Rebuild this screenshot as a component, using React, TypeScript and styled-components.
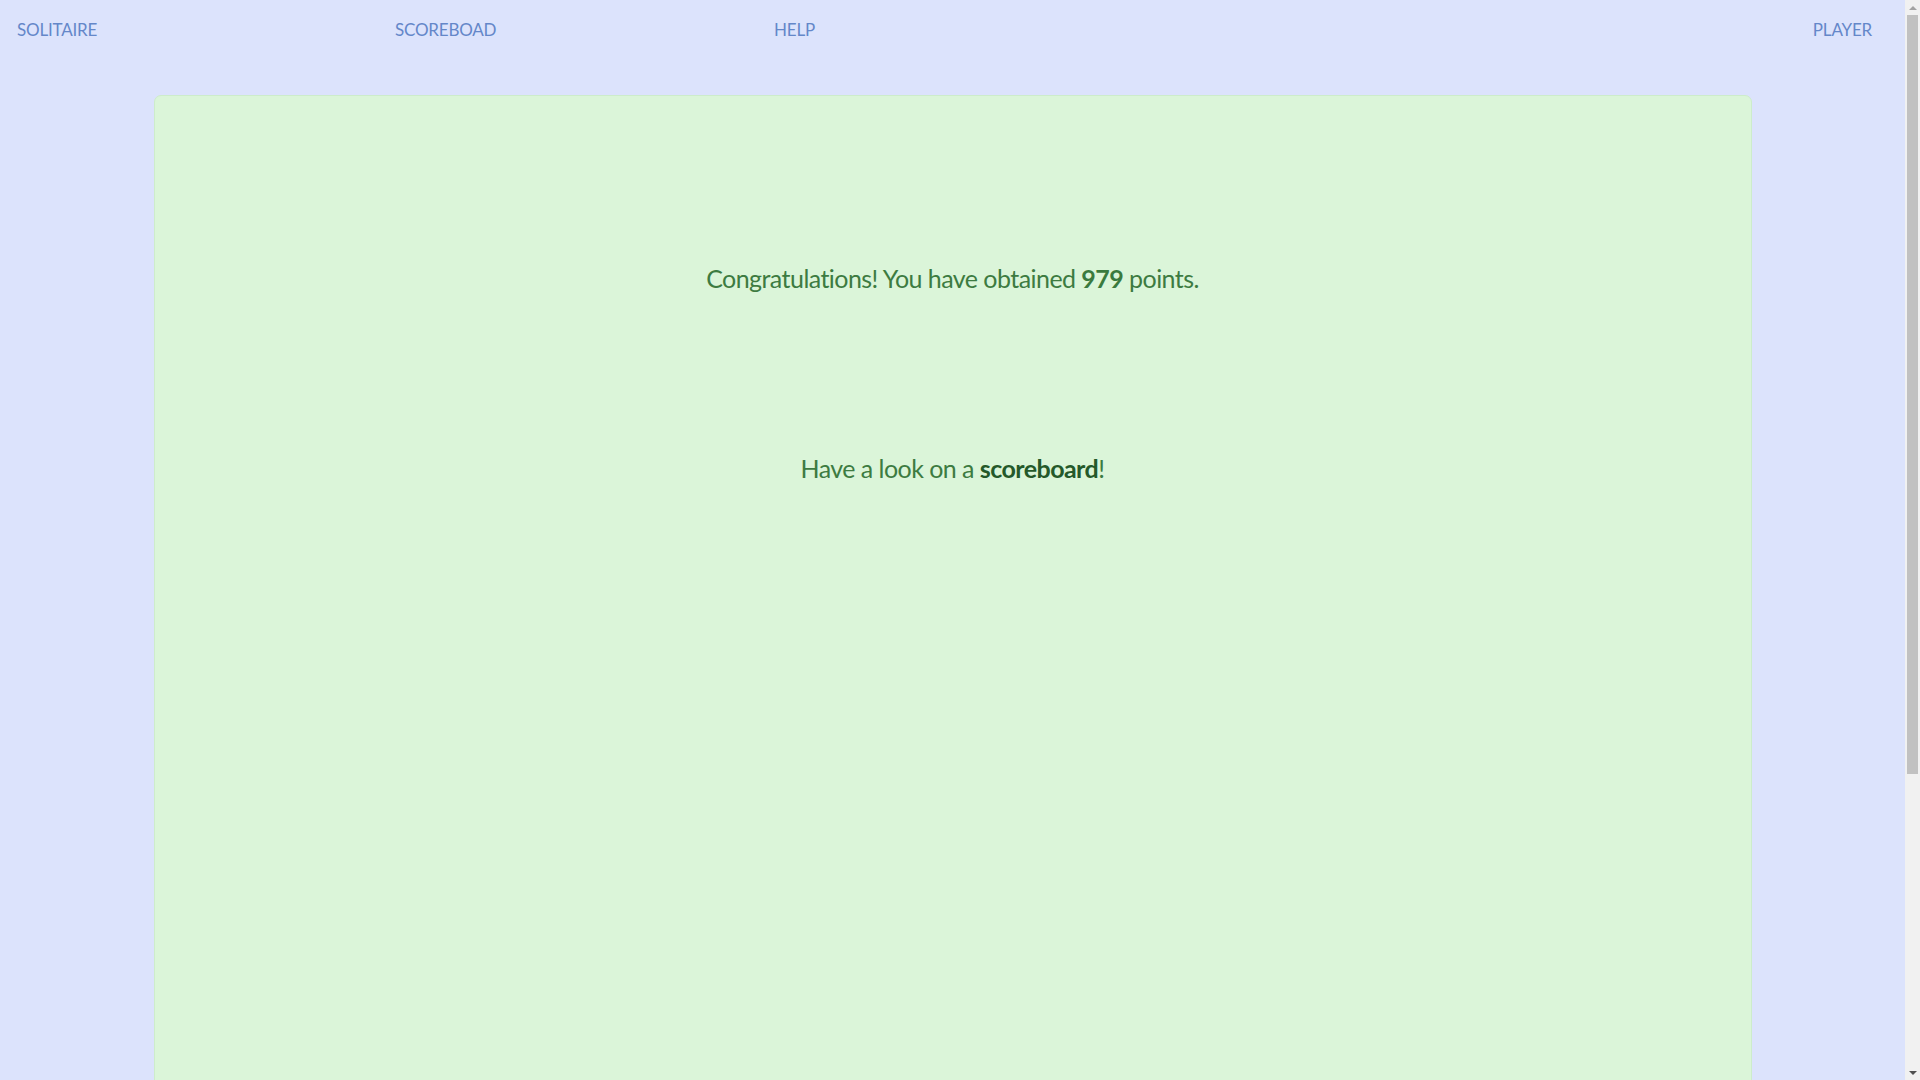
import React from "react";
import styled, { createGlobalStyle } from "styled-components";

const Global = createGlobalStyle`
  html, body {
    margin: 0;
    padding: 0;
    background: #dce3fc;
  }
  body {
    font-family: Lato, sans-serif;
  }
`;

const Page = styled.div`
  display: flex;
  flex-direction: column;
  padding: 0 15px 16px 0;
`;

const Nav = styled.nav`
  display: grid;
  grid-template-columns: 378px 379px 1fr auto;
  align-items: center;
  height: 60px;
  padding: 0 33px 0 17px;
`;

const NavLink = styled.a`
  font-family: Lato, sans-serif;
  font-size: 17px;
  font-weight: 400;
  color: #6487c9;
  text-decoration: none;
  letter-spacing: -0.2px;
  line-height: 1;
  margin-top: -2px;
`;

const Card = styled.main`
  width: 1598px;
  height: 1380px;
  margin: 35px auto 0;
  background: #dbf5d9;
  border: 1px solid #cdeccb;
  border-radius: 7px;
  display: flex;
  flex-direction: column;
  align-items: center;
  padding-top: 164px;
  box-sizing: border-box;
`;

const Message = styled.p<{ $gap?: number }>`
  margin: ${(p) => p.$gap ?? 0}px 0 0;
  font-family: Lato, sans-serif;
  font-size: 25px;
  line-height: 36px;
  color: #3d7b41;
  letter-spacing: -0.55px;
`;

const Strong = styled.b<{ $dark?: boolean }>`
  font-weight: 700;
  color: ${(p) => (p.$dark ? "#24592a" : "#3a7a3e")};
`;

/* Window scrollbar, drawn over the page's right edge */
const ScrollTrack = styled.div`
  position: fixed;
  top: 0;
  right: 0;
  width: 15px;
  height: 100vh;
  background: #f1f1f1;
  display: flex;
  flex-direction: column;
  align-items: center;
`;

const ScrollArrow = styled.div<{ $down?: boolean; $color: string }>`
  flex: 0 0 15px;
  width: 15px;
  display: flex;
  align-items: center;
  justify-content: center;
  order: ${(p) => (p.$down ? 3 : 0)};
  &::before {
    content: "";
    width: 0;
    height: 0;
    border-left: 4px solid transparent;
    border-right: 4px solid transparent;
    ${(p) =>
      p.$down
        ? `border-top: 4px solid ${p.$color};`
        : `border-bottom: 4px solid ${p.$color};`}
  }
`;

const ScrollThumb = styled.div`
  order: 1;
  width: 11px;
  height: 759px;
  background: #c1c1c1;
`;

const ScrollSpace = styled.div`
  order: 2;
  flex: 1;
`;

export default function App() {
  return (
    <Page>
      <Global />
      <Nav>
        <NavLink href="#">SOLITAIRE</NavLink>
        <NavLink href="#">SCOREBOAD</NavLink>
        <NavLink href="#">HELP</NavLink>
        <NavLink href="#">PLAYER</NavLink>
      </Nav>
      <Card>
        <Message>
          Congratulations! You have obtained <Strong>979</Strong> points.
        </Message>
        <Message $gap={154}>
          Have a look on a <Strong $dark>scoreboard</Strong>!
        </Message>
      </Card>
      <ScrollTrack aria-hidden>
        <ScrollArrow $color="#a3a3a3" />
        <ScrollThumb />
        <ScrollSpace />
        <ScrollArrow $down $color="#505050" />
      </ScrollTrack>
    </Page>
  );
}
